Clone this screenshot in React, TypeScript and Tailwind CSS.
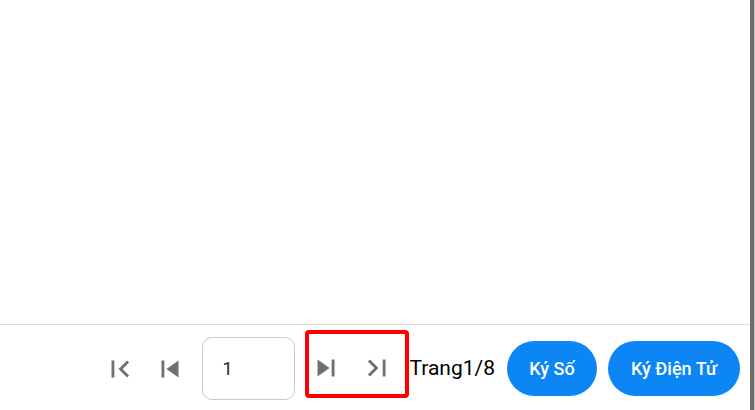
import React from "react";

const icons: Record<string, string> = {
  first: "M18.41 16.59L13.82 12l4.59-4.59L17 6l-6 6 6 6zM6 6h2v12H6z",
  prev: "M6 6h2v12H6zm3.5 6l8.5 6V6z",
  next: "M6 18l8.5-6L6 6v12zM16 6v12h2V6h-2z",
  last: "M5.59 7.41L10.18 12l-4.59 4.59L7 18l6-6-6-6zM16 6h2v12h-2z",
};

const PageIcon = ({ name }: { name: string }) => (
  <button className="flex h-[34px] w-[34px] items-center justify-center text-[#707070]">
    <svg viewBox="0 0 24 24" width={34} height={34} fill="currentColor">
      <path d={icons[name]} />
    </svg>
  </button>
);

const App = () => {
  return (
    <div
      className="flex h-[410px] w-[755px] bg-white"
      style={{ fontFamily: "Roboto, 'Noto Sans', sans-serif" }}
    >
      <div className="flex flex-1 flex-col">
        <div className="h-[325px] border-b border-[#dedede]" />
        <div className="flex flex-1 items-center justify-end pr-[10px] pt-[2px]">
          <PageIcon name="first" />
          <div className="w-[16px]" />
          <PageIcon name="prev" />
          <input
            defaultValue="1"
            className="ml-[15px] h-[63px] w-[93px] rounded-[10px] border border-[#c9c9c9] pl-[19px] text-[18px] text-[#222] outline-none"
          />
          <div className="mb-[9px] ml-[10px] flex h-[68px] items-center rounded-[4px] border-[4.5px] border-[#f00] pr-[11px] pt-[8px]">
            <PageIcon name="next" />
            <div className="w-[17px]" />
            <PageIcon name="last" />
          </div>
          <span className="text-[21px] text-black">Trang1/8</span>
          <button className="ml-[12px] h-[55px] w-[90px] rounded-full bg-[#0c85f5] text-[18px] font-medium text-white">
            Ký Số
          </button>
          <button className="ml-[11px] h-[55px] w-[132px] rounded-full bg-[#0c85f5] text-[18px] font-medium text-white">
            Ký Điện Tử
          </button>
        </div>
      </div>
      <div className="flex w-[5px]">
        <div className="w-[4px] bg-[#6d6d6d]" />
        <div className="w-[1px] bg-[#bdbdbd]" />
      </div>
    </div>
  );
};

export default App;
